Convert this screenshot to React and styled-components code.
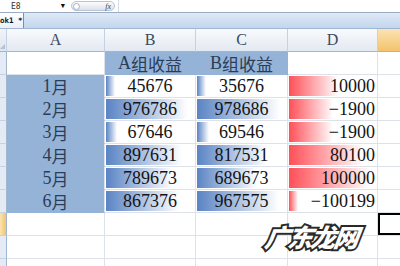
import React from "react";
import styled, { createGlobalStyle, css } from "styled-components";

const Global = createGlobalStyle`
  html, body { margin: 0; padding: 0; background: #fff; }
  body { width: 400px; height: 266px; overflow: hidden; font-family: "Liberation Serif", "Noto Sans CJK SC", serif; }
`;

const Page = styled.div`
  position: relative;
  width: 400px;
  height: 266px;
  overflow: hidden;
  display: flex;
  flex-direction: column;
`;

const FormulaBar = styled.div`
  height: 12px;
  flex: none;
  display: flex;
  align-items: center;
  background: #fff;
  border-bottom: 1px solid #9aabc3;
`;

const NameBox = styled.div`
  width: 71px;
  flex: none;
  display: flex;
  align-items: center;
  justify-content: space-between;
  padding: 0 6px 0 11px;
  box-sizing: border-box;
  font-family: "DejaVu Sans Mono", monospace;
  font-size: 8px;
  color: #333;
`;

const Arrow = styled.span`
  font-size: 7px;
  color: #111;
`;

const Pill = styled.div`
  width: 44px;
  height: 10px;
  flex: none;
  box-sizing: border-box;
  border: 1px solid #b9c4d3;
  border-radius: 6px;
  background: linear-gradient(#fbfcfd, #dce2ea);
  display: flex;
  align-items: center;
  justify-content: space-between;
  padding: 0 3px 0 1px;
`;

const Knob = styled.span`
  width: 7px;
  height: 7px;
  border-radius: 50%;
  border: 1px solid #a6b2c3;
  background: #fff;
  box-sizing: border-box;
`;

const Fx = styled.span`
  font-family: "Liberation Serif", serif;
  font-style: italic;
  font-size: 8px;
  color: #444;
`;

const FormulaField = styled.div`
  flex: 1;
  height: 12px;
  margin-left: 3px;
  border-left: 1px solid #d5dce6;
  background: #fff;
`;

const TabBar = styled.div`
  height: 15px;
  flex: none;
  display: flex;
  background: linear-gradient(#dfe9f6, #c3d6ee);
  border-bottom: 1px solid #9fb6d3;
`;

const Tab = styled.div`
  width: 24px;
  box-sizing: border-box;
  border-right: 1px solid #6f8fbf;
  background: linear-gradient(#ffffff, #e9eff8);
  font-family: "DejaVu Sans Mono", monospace;
  font-weight: bold;
  font-size: 7.5px;
  line-height: 15px;
  color: #111;
  white-space: nowrap;
  overflow: hidden;
`;

const Sheet = styled.div`
  display: grid;
  grid-template-columns: 7px 98px 91px 92px 90px 60px;
  grid-auto-rows: 23px;
  flex: none;
`;

const headBase = css`
  box-sizing: border-box;
  border-right: 1px solid #c5d2e3;
  border-bottom: 1px solid #9eb6ce;
`;

const Corner = styled.div`
  ${headBase};
  background: linear-gradient(#f1f4f8, #dfe6ef);
  display: flex;
  align-items: flex-end;
  justify-content: flex-end;
  padding: 0 1px 2px 0;
`;

const CornerMark = styled.span`
  width: 0;
  height: 0;
  border-left: 5px solid transparent;
  border-bottom: 5px solid #b4c2d4;
`;

const ColHead = styled.div`
  ${headBase};
  background: ${(p) =>
    p.$active
      ? "linear-gradient(#fbe3b3, #f3c36c)"
      : "linear-gradient(#f8fafc, #e3e9f2)"};
  display: flex;
  align-items: center;
  justify-content: center;
  font-family: "Liberation Serif", serif;
  font-size: 16px;
  color: #3a4a60;
  overflow: hidden;
`;

const RowHead = styled.div`
  box-sizing: border-box;
  border-right: 1px solid #9eb6ce;
  border-bottom: 1px solid #c5d2e3;
  background: ${(p) =>
    p.$active ? "linear-gradient(90deg, #fbe3b3, #f3c36c)" : "#e4ebf4"};
`;

const Cell = styled.div`
  box-sizing: border-box;
  border-right: 1px solid ${(p) => (p.$fill ? p.$fill : "#dde2ea")};
  border-bottom: 1px solid ${(p) => (p.$fill ? p.$fill : "#dde2ea")};
  background-color: ${(p) => p.$fill || "#fff"};
  background-repeat: no-repeat;
  background-position: 1px 1px;
  display: flex;
  align-items: center;
  justify-content: ${(p) => (p.$align === "right" ? "flex-end" : "center")};
  padding: 1px 2px 0 2px;
  font-family: "Liberation Serif", "Noto Sans CJK SC", serif;
  font-size: 18px;
  color: ${(p) => (p.$fill ? "#2a3d58" : "#141414")};
  white-space: nowrap;
  overflow: visible;
  ${(p) => p.$edge && css`border-right-color: #dde2ea;`}
  ${(p) => p.$selected && css`box-shadow: inset 0 0 0 2px #000;`}
`;

const BarCell = styled(Cell)`
  background-image: ${(p) =>
    p.$tone === "red"
      ? "linear-gradient(to right, #ff4f57, #ffffff)"
      : "linear-gradient(to right, #5a84c4, #ffffff)"};
`;

const CjkText = styled.span`
  font-family: "Noto Sans CJK SC", sans-serif;
  font-size: 17px;
  line-height: 1;
`;

const Watermark = styled.div`
  position: absolute;
  left: 265px;
  top: 218px;
  font-family: "Noto Sans CJK SC", sans-serif;
  font-weight: 900;
  font-style: italic;
  font-size: 25px;
  letter-spacing: -2px;
  color: #fff;
  -webkit-text-stroke: 4px #2a2a2a;
  paint-order: stroke fill;
  transform: skewX(-8deg);
  white-space: nowrap;
`;

const months = ["1月", "2月", "3月", "4月", "5月", "6月"];
const colB = [45676, 976786, 67646, 897631, 789673, 867376];
const colC = [35676, 978686, 69546, 817531, 689673, 967575];
const colD = [10000, -1900, -1900, 80100, 100000, -100199];

const barWidth = (v, arr, cellW) => {
  const min = Math.min(...arr);
  const max = Math.max(...arr);
  return Math.round(cellW * (0.1 + (0.8 * (v - min)) / (max - min)));
};

const fmt = (v) => (v < 0 ? "\u2212" + Math.abs(v) : String(v));

const BLUE = "#95b3d7";

export default function App() {
  const rows = [];
  for (let r = 1; r <= 10; r++) {
    const i = r - 2;
    const isData = i >= 0 && i < 6;
    rows.push(<RowHead key={`h${r}`} $active={r === 8} />);
    if (r === 1) {
      rows.push(<Cell key={`a${r}`} />);
      rows.push(
        <Cell key={`b${r}`} $fill={BLUE}>
          A<CjkText>组收益</CjkText>
        </Cell>
      );
      rows.push(
        <Cell key={`c${r}`} $fill={BLUE}>
          B<CjkText>组收益</CjkText>
        </Cell>
      );
      rows.push(<Cell key={`d${r}`} />);
    } else if (isData) {
      rows.push(
        <Cell key={`a${r}`} $fill={BLUE} $edge>
          {months[i].slice(0, 1)}
          <CjkText>月</CjkText>
        </Cell>
      );
      rows.push(
        <BarCell
          key={`b${r}`}
          style={{ backgroundSize: `${barWidth(colB[i], colB, 91)}px 20px` }}
        >
          {colB[i]}
        </BarCell>
      );
      rows.push(
        <BarCell
          key={`c${r}`}
          style={{ backgroundSize: `${barWidth(colC[i], colC, 92)}px 20px` }}
        >
          {colC[i]}
        </BarCell>
      );
      rows.push(
        <BarCell
          key={`d${r}`}
          $tone="red"
          $align="right"
          style={{ backgroundSize: `${barWidth(colD[i], colD, 90)}px 20px` }}
        >
          {fmt(colD[i])}
        </BarCell>
      );
    } else {
      rows.push(<Cell key={`a${r}`} />);
      rows.push(<Cell key={`b${r}`} />);
      rows.push(<Cell key={`c${r}`} />);
      rows.push(<Cell key={`d${r}`} />);
    }
    rows.push(<Cell key={`e${r}`} $selected={r === 8} />);
  }

  return (
    <Page>
      <Global />
      <FormulaBar>
        <NameBox>
          <span>E8</span>
          <Arrow>▼</Arrow>
        </NameBox>
        <Pill>
          <Knob />
          <Fx>fx</Fx>
        </Pill>
        <FormulaField />
      </FormulaBar>
      <TabBar>
        <Tab>ok1 *</Tab>
      </TabBar>
      <Sheet>
        <Corner>
          <CornerMark />
        </Corner>
        <ColHead>A</ColHead>
        <ColHead>B</ColHead>
        <ColHead>C</ColHead>
        <ColHead>D</ColHead>
        <ColHead $active />
        {rows}
      </Sheet>
      <Watermark>广东龙网</Watermark>
    </Page>
  );
}
